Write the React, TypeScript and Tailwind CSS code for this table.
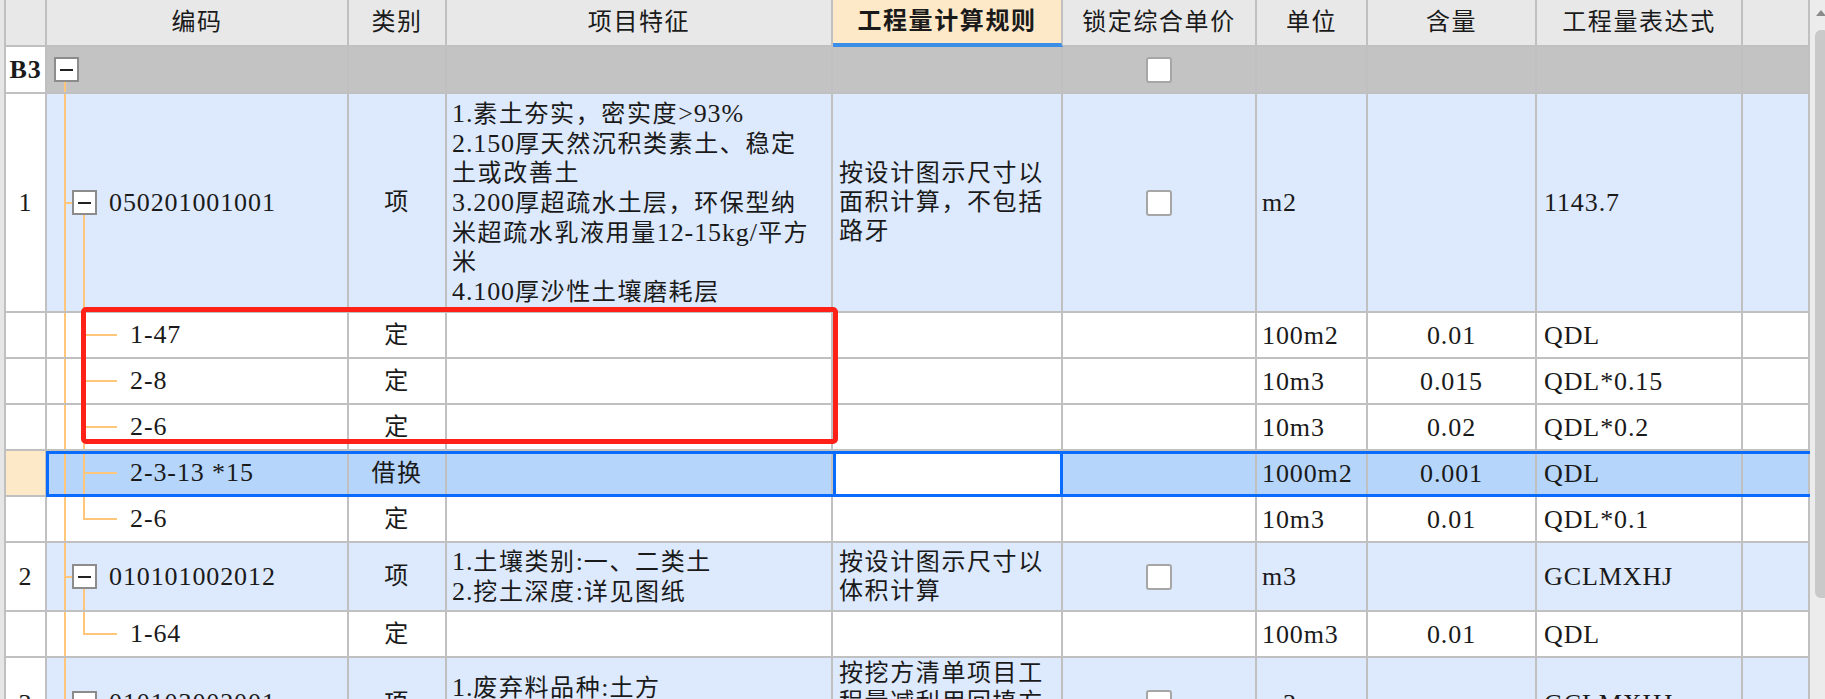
import React from 'react'

const COLS =
  'grid grid-cols-[43px_302px_98px_386px_230px_194px_111px_169px_206px_67px]'
const TXT =
  "font-['Liberation_Serif','Noto_Sans_CJK_SC',serif] text-[24px] leading-[29px] tracking-[1.6px] text-[#1a1a1a]"
const CELL = 'border-r-2 border-b-2 border-[#c0c0c0] flex items-center min-w-0 overflow-hidden'
const LINE = 'absolute bg-[#ffc67c]'
const CJK = /[\u3000-\u9fff\uff00-\uffef]/

// Latin runs a little larger and tighter than CJK runs, like the grid's bitmap font
function T({ s }: { s?: string }) {
  if (!s) return null
  const parts = s.split(/([\u3000-\u9fff\uff00-\uffef]+)/)
  return (
    <>
      {parts.map((p, i) =>
        p ? (
          <span
            key={i}
            className={CJK.test(p) ? 'text-[24px] tracking-[1.6px]' : 'text-[26px] tracking-[0.9px]'}
          >
            {p}
          </span>
        ) : null,
      )}
    </>
  )
}

type Row = {
  kind: 'group' | 'item' | 'child'
  num?: string
  code?: string
  cat?: string
  features?: string[]
  rule?: string[]
  lock?: boolean
  unit?: string
  qty?: string
  expr?: string
  h: string
  last?: boolean
  selected?: boolean
}

const rows: Row[] = [
  { kind: 'group', num: 'B3', lock: true, h: 'h-[47px]' },
  {
    kind: 'item',
    num: '1',
    code: '050201001001',
    cat: '项',
    features: [
      '1.素土夯实，密实度>93%',
      '2.150厚天然沉积类素土、稳定',
      '土或改善土',
      '3.200厚超疏水土层，环保型纳',
      '米超疏水乳液用量12-15kg/平方',
      '米',
      '4.100厚沙性土壤磨耗层',
    ],
    rule: ['按设计图示尺寸以', '面积计算，不包括', '路牙'],
    lock: true,
    unit: 'm2',
    expr: '1143.7',
    h: 'h-[219px]',
  },
  { kind: 'child', code: '1-47', cat: '定', unit: '100m2', qty: '0.01', expr: 'QDL', h: 'h-[46px]' },
  { kind: 'child', code: '2-8', cat: '定', unit: '10m3', qty: '0.015', expr: 'QDL*0.15', h: 'h-[46px]' },
  { kind: 'child', code: '2-6', cat: '定', unit: '10m3', qty: '0.02', expr: 'QDL*0.2', h: 'h-[46px]' },
  {
    kind: 'child',
    code: '2-3-13 *15',
    cat: '借换',
    unit: '1000m2',
    qty: '0.001',
    expr: 'QDL',
    h: 'h-[46px]',
    selected: true,
  },
  { kind: 'child', code: '2-6', cat: '定', unit: '10m3', qty: '0.01', expr: 'QDL*0.1', h: 'h-[46px]', last: true },
  {
    kind: 'item',
    num: '2',
    code: '010101002012',
    cat: '项',
    features: ['1.土壤类别:一、二类土', '2.挖土深度:详见图纸'],
    rule: ['按设计图示尺寸以', '体积计算'],
    lock: true,
    unit: 'm3',
    expr: 'GCLMXHJ',
    h: 'h-[69px]',
  },
  { kind: 'child', code: '1-64', cat: '定', unit: '100m3', qty: '0.01', expr: 'QDL', h: 'h-[46px]', last: true },
  {
    kind: 'item',
    num: '3',
    code: '010103002001',
    cat: '项',
    features: ['1.废弃料品种:土方', '2.运距:自行考虑'],
    rule: ['按挖方清单项目工', '程量减利用回填方', '体积(正数)计算'],
    lock: true,
    unit: 'm3',
    expr: 'GCLMXHJ',
    h: 'h-[92px]',
  },
]

const headers = ['编码', '类别', '项目特征', '工程量计算规则', '锁定综合单价', '单位', '含量', '工程量表达式', '']

function Collapse() {
  return (
    <div className="relative z-10 w-[25px] h-[25px] shrink-0 bg-white border-2 border-[#8c8c8c] flex items-center justify-center">
      <div className="w-[13px] h-[2px] bg-[#222]" />
    </div>
  )
}

function Checkbox() {
  return <div className="w-[26px] h-[26px] bg-white border-2 border-[#a6a6a6] rounded-[3px]" />
}

function CodeCell({ row }: { row: Row }) {
  if (row.kind === 'group') {
    return (
      <div className={`${CELL} relative pl-[7px]`}>
        <div className={`${LINE} left-[17px] w-[2px] top-[34px] -bottom-[2px]`} />
        <Collapse />
      </div>
    )
  }
  if (row.kind === 'item') {
    return (
      <div className={`${CELL} relative pl-[25px] gap-[12px]`}>
        <div className={`${LINE} left-[17px] w-[2px] top-0 -bottom-[2px]`} />
        <div className={`${LINE} left-[18px] w-[8px] h-[2px] top-[calc(50%-1px)]`} />
        <div className={`${LINE} left-[36px] w-[2px] top-[calc(50%+12px)] -bottom-[2px]`} />
        <Collapse />
        <span className="whitespace-nowrap">
          <T s={row.code} />
        </span>
      </div>
    )
  }
  return (
    <div className={`${CELL} relative pl-[83px]`}>
      <div className={`${LINE} left-[17px] w-[2px] top-0 -bottom-[2px]`} />
      {row.last ? (
        <div className={`${LINE} left-[36px] w-[2px] top-0 h-[calc(50%+1px)]`} />
      ) : (
        <div className={`${LINE} left-[36px] w-[2px] top-0 -bottom-[2px]`} />
      )}
      <div className={`${LINE} left-[36px] w-[34px] h-[2px] top-[calc(50%-1px)]`} />
      <span className="whitespace-pre">
        <T s={row.code} />
      </span>
    </div>
  )
}

function TableRow({ row }: { row: Row }) {
  const bg =
    row.kind === 'group'
      ? 'bg-[#c3c3c3]'
      : row.selected
        ? 'bg-[#b5d5fb]'
        : row.kind === 'item'
          ? 'bg-[#dde9fc]'
          : 'bg-white'

  return (
    <div className={`${COLS} ${row.h} ${bg} relative shrink-0`}>
      <div
        className={`${CELL} border-l-2 justify-center ${row.selected ? 'bg-[#fde8c8]' : 'bg-white'} ${
          row.kind === 'group' ? 'font-bold' : ''
        }`}
      >
        <T s={row.num} />
      </div>
      <CodeCell row={row} />
      <div className={`${CELL} justify-center`}>{row.cat}</div>
      <div className={`${CELL} pl-[5px]`}>
        <div>
          {row.features?.map((l, i) => (
            <div key={i} className="whitespace-nowrap">
              <T s={l} />
            </div>
          ))}
        </div>
      </div>
      <div className={row.selected ? 'border-[3px] border-[#0a6cff] bg-white' : `${CELL} pl-[6px]`}>
        <div>
          {row.rule?.map((l, i) => (
            <div key={i} className="whitespace-nowrap">
              <T s={l} />
            </div>
          ))}
        </div>
      </div>
      <div className={`${CELL} justify-center`}>{row.lock && <Checkbox />}</div>
      <div className={`${CELL} pl-[5px] whitespace-nowrap`}>
        <T s={row.unit} />
      </div>
      <div className={`${CELL} justify-center whitespace-nowrap`}>
        <T s={row.qty} />
      </div>
      <div className={`${CELL} pl-[7px] whitespace-nowrap`}>
        <T s={row.expr} />
      </div>
      <div className={CELL} />

      {/* selected row outline */}
      {row.selected && (
        <div className="absolute left-[42px] -right-[4px] top-0 bottom-0 border-[3px] border-[#0a6cff] pointer-events-none" />
      )}
    </div>
  )
}

export default function App() {
  return (
    <div className={`${TXT} relative w-[1825px] h-[699px] overflow-hidden bg-[#e6e6e6] flex`}>
      <div className="w-[4px] shrink-0" />

      <div className="w-[1806px] shrink-0 flex flex-col overflow-hidden">
        {/* Header */}
        <div className={`${COLS} h-[47px] shrink-0 bg-[#e8e8e8]`}>
          <div className={`${CELL} border-l-2`} />
          {headers.map((h) =>
            h === '工程量计算规则' ? (
              <div
                key={h}
                className="border-r-2 border-[#c0c0c0] border-b-4 border-b-[#3b8ee8] bg-[#fde8c8] flex items-center justify-center font-bold"
              >
                {h}
              </div>
            ) : (
              <div key={h || 'blank'} className={`${CELL} justify-center`}>
                {h}
              </div>
            ),
          )}
        </div>

        {rows.map((r, i) => (
          <TableRow key={i} row={r} />
        ))}
      </div>

      {/* Scrollbar */}
      <div className="w-[15px] shrink-0 bg-[#ececec] relative">
        <div className="absolute left-[6px] top-[10px] w-0 h-0 border-l-[5px] border-r-[5px] border-b-[6px] border-l-transparent border-r-transparent border-b-[#8a8a8a]" />
        <div className="absolute left-[5px] top-[30px] w-[14px] h-[568px] rounded-[6px] bg-[#c9c9c9]" />
      </div>

      {/* annotation */}
      <div className="absolute left-[81px] top-[307px] w-[757px] h-[137px] border-[5px] border-[#ff2117] rounded-[5px] pointer-events-none" />
    </div>
  )
}
